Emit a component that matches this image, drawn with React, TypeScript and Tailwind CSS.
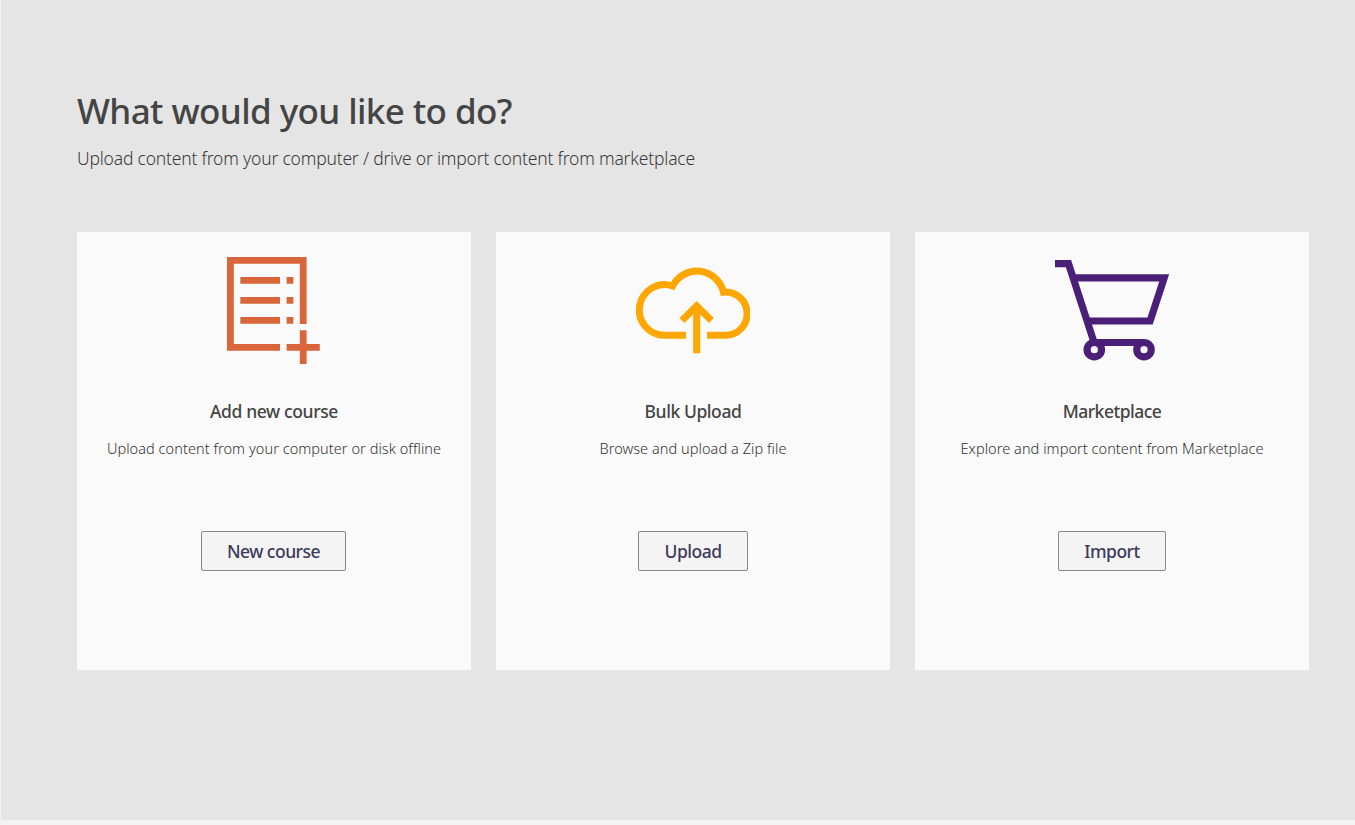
import type { ReactNode } from 'react';

function CourseIcon() {
  return (
    <svg viewBox="0 0 114 114" className="size-[114px]" fill="none" stroke="#d9663a" strokeWidth="6.8">
      <path d="M63 94.4H13.4V7.4H86.2V71" />
      <path d="M23.3 27.4H63M23.3 47.4H63M23.3 67.4H63" />
      <path d="M69.6 27.4H76.4M69.6 47.4H76.4M69.6 67.4H76.4" />
      <path d="M69.6 94.4H102.8M86.2 77.2V111" />
    </svg>
  );
}

function CloudIcon() {
  return (
    <svg viewBox="0 0 114 114" className="size-[114px]" fill="none" stroke="#ffa600" strokeWidth="7">
      <path d="M50 82.3H28.8A25.3 25.3 0 1 1 36.6 33A27.3 27.3 0 0 1 87.5 39.2A21.6 21.6 0 1 1 89 82.3H71" />
      <path d="M60.7 100.3V53M46 67.6L60.7 53L75.4 67.6" />
    </svg>
  );
}

function CartIcon() {
  return (
    <svg viewBox="0 0 114 114" className="size-[114px]" fill="none" stroke="#4b1f78" strokeWidth="7.2">
      <path d="M0 10.7H13.5L38.6 88" />
      <path d="M18 24.9H109.2L95.1 68H32" />
      <path d="M38 89.5H89" />
      <circle cx="39.3" cy="96.7" r="7.2" />
      <circle cx="89" cy="96.7" r="7.2" />
    </svg>
  );
}

interface CardProps {
  icon: ReactNode;
  title: string;
  titleClass: string;
  text: string;
  action: string;
  actionClass: string;
}

const cards: CardProps[] = [
  {
    icon: <CourseIcon />,
    title: 'Add new course',
    titleClass: 'tracking-[-0.37px]',
    text: 'Upload content from your computer or disk offline',
    action: 'New course',
    actionClass: 'mr-px w-[145px]',
  },
  {
    icon: <CloudIcon />,
    title: 'Bulk Upload',
    titleClass: 'tracking-[-0.43px]',
    text: 'Browse and upload a Zip file',
    action: 'Upload',
    actionClass: 'w-[110px]',
  },
  {
    icon: <CartIcon />,
    title: 'Marketplace',
    titleClass: 'tracking-[-0.5px]',
    text: 'Explore and import content from Marketplace',
    action: 'Import',
    actionClass: 'w-[108px]',
  },
];

function Card({ icon, title, titleClass, text, action, actionClass }: CardProps) {
  return (
    <section className="flex h-[438px] w-[394px] flex-col items-center bg-[#fafafa] pt-[21px]">
      {icon}
      <h2 className={`mt-8 text-[17.5px] leading-[25px] font-medium whitespace-nowrap text-[#444] ${titleClass}`}>
        {title}
      </h2>
      <p className="mt-[14px] text-[14.5px] leading-5 font-light tracking-[0.06px] whitespace-nowrap text-[#333]">
        {text}
      </p>
      <button
        className={`mt-[73px] flex h-10 items-center justify-center rounded-[2px] border border-[#888] bg-[#f4f4f4] pt-px text-[17.5px] font-medium tracking-[-0.5px] text-[#3d3a5c] ${actionClass}`}
      >
        {action}
      </button>
    </section>
  );
}

export default function App() {
  return (
    <div className="h-[825px] w-[1355px] overflow-hidden bg-[#f3f3f3] pb-[5px] pl-px font-['Noto_Sans',sans-serif]">
      <main className="h-full bg-[#e5e5e5] pt-[87px] pl-[76px]">
        <h1 className="text-[35px] leading-[48px] font-medium tracking-[-0.6px] whitespace-nowrap text-[#444]">
          What would you like to do?
        </h1>
        <p className="mt-[11px] text-[17.5px] leading-6 font-light tracking-[-0.2px] whitespace-nowrap text-[#3a3a3a]">
          Upload content from your computer / drive or import content from marketplace
        </p>
        <div className="mt-[62px] flex gap-[25px]">
          {cards.map((card) => (
            <Card key={card.title} {...card} />
          ))}
        </div>
      </main>
    </div>
  );
}
